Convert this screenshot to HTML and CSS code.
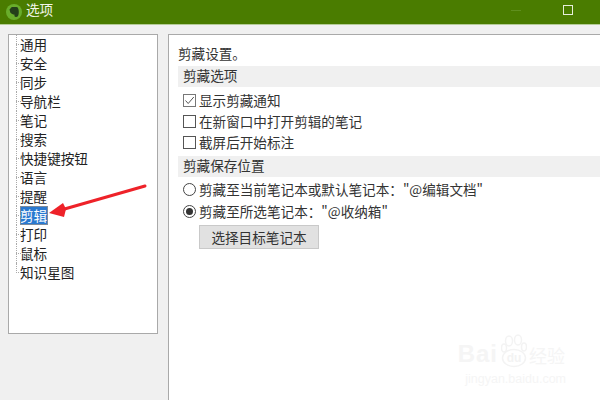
FILE: index.html
```html
<!DOCTYPE html>
<html lang="zh">
<head>
<meta charset="utf-8">
<title>选项</title>
<link rel="stylesheet" href="styles.css">
</head>
<body>
<div class="win">
  <header class="titlebar">
    <svg class="logo" width="16" height="16" viewBox="0 0 16 16"><circle cx="8" cy="8" r="8" fill="#69ad2b"/><path d="M3.500 5.500 5.800 3H10.500C12 3 12.800 5 12.800 8S12 13 10 13C8.500 13 8 11.800 8.700 10.800 7 10.500 5 9.800 4.300 8.500Z" fill="#24401a"/></svg>
    <span class="title">选项</span>
    <span class="spacer"></span>
    <span class="min"></span>
    <span class="max"></span>
  </header>
  <main class="content">
    <nav class="tree">
      <div class="node"><span class="lbl">通用</span></div>
      <div class="node"><span class="lbl">安全</span></div>
      <div class="node"><span class="lbl">同步</span></div>
      <div class="node"><span class="lbl">导航栏</span></div>
      <div class="node"><span class="lbl">笔记</span></div>
      <div class="node"><span class="lbl">搜索</span></div>
      <div class="node"><span class="lbl">快捷键按钮</span></div>
      <div class="node"><span class="lbl">语言</span></div>
      <div class="node"><span class="lbl">提醒</span></div>
      <div class="node"><span class="lbl sel">剪辑</span></div>
      <div class="node"><span class="lbl">打印</span></div>
      <div class="node"><span class="lbl">鼠标</span></div>
      <div class="node last"><span class="lbl">知识星图</span></div>
    </nav>
    <section class="panel">
      <p class="intro">剪藏设置。</p>
      <h2 class="band">剪藏选项</h2>
      <div class="opt"><span class="check on"><svg width="11" height="11" viewBox="0 0 11 11"><path d="M1.500 5.500 4.200 8.500 9.800 2" fill="none" stroke="#555" stroke-width="1"/></svg></span>显示剪藏通知</div>
      <div class="opt"><span class="check"></span>在新窗口中打开剪辑的笔记</div>
      <div class="opt"><span class="check"></span>截屏后开始标注</div>
      <h2 class="band band2">剪藏保存位置</h2>
      <div class="opt"><span class="radio"></span>剪藏至当前笔记本或默认笔记本："@编辑文档"</div>
      <div class="opt opt-gap"><span class="radio on"></span>剪藏至所选笔记本："@收纳箱"</div>
      <button class="btn" type="button">选择目标笔记本</button>
    </section>
  </main>
  <svg class="arrow" width="110" height="40" viewBox="0 0 110 40"><path d="M98 2 14 26" stroke="#ee2229" stroke-width="3" stroke-linecap="round" fill="none"/><path d="M2 29 16 19 19 25 17 33Z" fill="#ee2229"/></svg>
  <div class="mark">
    <span class="mark-bai">Bai</span>
    <svg class="paw" width="26" height="34" viewBox="0 0 26 34"><g fill="none" stroke="#f3f3f3" stroke-width="1.500"><ellipse cx="8" cy="7" rx="3.500" ry="5"/><ellipse cx="17" cy="6" rx="3.500" ry="5"/><ellipse cx="23" cy="13" rx="2.500" ry="4"/><ellipse cx="3" cy="14" rx="2.500" ry="4"/><ellipse cx="13" cy="24" rx="11.500" ry="8.500"/></g><text x="13" y="28" text-anchor="middle" font-family="Liberation Sans" font-size="12" font-weight="700" fill="#f3f3f3">du</text></svg>
    <span class="mark-cn">经验</span>
    <div class="mark-sub">jingyan.baidu.com</div>
  </div>
</div>
</body>
</html>
```
FILE: styles.css
```css
* { box-sizing: border-box; }
html, body { margin: 0; padding: 0; }
body { width: 600px; height: 400px; overflow: hidden; background: #f0f0f0; font-family: "Noto Sans CJK SC", "Liberation Sans", sans-serif; font-size: 13.600px; color: #222; }
.win { position: relative; width: 600px; height: 400px; overflow: hidden; }
.titlebar { height: 25px; background: #4a7c00; border-bottom: 1px solid #b5cc98; display: flex; align-items: center; padding: 0 27px 4px 6px; color: #f2f6ea; }
.logo { flex: none; margin-top: 3px; }
.title { margin-left: 4px; font-size: 13.600px; line-height: 16px; margin-bottom: 2px; }
.spacer { flex: 1; }
.min { width: 10px; height: 1px; background: #5f8f1e; margin-right: 42px; }
.max { width: 10px; height: 10px; border: 1px solid #e6eedb; }
.content { display: flex; gap: 10px; padding: 9px 0 0 8px; height: 375px; }
.tree { width: 150px; height: 300px; flex: none; background: #fff; border: 1px solid #a9a9a9; padding: 0 0 0 7px; }
.node { height: 19px; display: flex; align-items: center; padding-left: 4px; position: relative; }
.node::before { content: ""; position: absolute; left: 0; top: 0; bottom: 0; border-left: 1px dotted #aaa; }
.node::after { content: ""; position: absolute; left: 0; width: 5px; top: 9px; border-top: 1px dotted #aaa; }
.node.last::before { bottom: 9px; }
.lbl { display: inline-block; color: #222; height: 19px; line-height: 18px; }
.lbl.sel { background: #2a79d0; color: #fff; outline: 1px solid #7d8b9c; outline-offset: -1px; width: 28px; }
.panel { flex: 1; background: #fff; border: 1px solid #a9a9a9; border-right: 0; border-bottom: 0; padding: 8px 0 0 9px; min-height: 375px; }
.intro { margin: 0 0 3px; height: 20px; line-height: 20px; color: #333; }
.band { margin: 0 0 2px; height: 21px; line-height: 19px; background: #f0f0f0; padding-left: 5px; font-size: 13.600px; font-weight: 400; color: #333; }
.band2 { margin: 4px 0 1px; }
.opt { height: 21px; line-height: 18px; display: flex; align-items: center; padding: 0 0 0 5px; color: #333; white-space: nowrap; }
.opt-gap { margin-top: 1px; }
.check { width: 13px; height: 13px; border: 1px solid #555; margin: 1px 3px 0 0; display: flex; align-items: center; justify-content: center; flex: none; }
.check.on { border-color: #777; }
.radio { width: 13px; height: 13px; border: 1px solid #444; border-radius: 50%; margin: 1px 3px 0 0; flex: none; display: flex; align-items: center; justify-content: center; }
.radio.on::after { content: ""; width: 7px; height: 7px; border-radius: 50%; background: #333; }
.btn { display: block; margin: 4px 0 0 21px; width: 120px; height: 24px; background: #e1e1e1; border: 1px solid #c9c9c9; font: inherit; line-height: 20px; color: #333; padding: 0 0 1px; }
.arrow { position: absolute; left: 47px; top: 184px; }
.mark { position: absolute; left: 440px; top: 334px; width: 126px; height: 52px; color: #f5f5f5; display: flex; flex-wrap: wrap; justify-content: flex-end; align-items: flex-end; pointer-events: none; }
.mark-bai { font-family: "Liberation Sans", sans-serif; font-size: 24px; font-weight: 700; line-height: 28px; letter-spacing: 1px; }
.paw { margin: 0 2px 0 3px; flex: none; }
.mark-cn { font-size: 18px; line-height: 26px; width: 37px; white-space: nowrap; }
.mark-sub { width: 100%; text-align: right; font-family: "Liberation Sans", sans-serif; font-size: 12.500px; line-height: 14px; white-space: nowrap; margin-top: 4px; }
```
